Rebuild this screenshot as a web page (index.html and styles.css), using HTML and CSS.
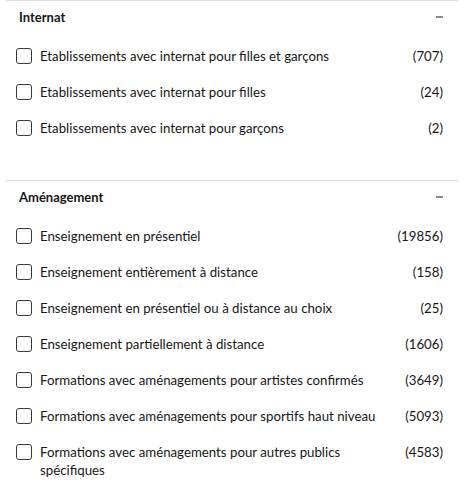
FILE: index.html
```html
<!DOCTYPE html>
<html lang="fr">
<head>
<meta charset="utf-8">
<link rel="stylesheet" href="styles.css">
</head>
<body>
<div class="filters">
  <section class="group">
    <div class="group-head">
      <span class="group-title">Internat</span>
      <span class="toggle" aria-hidden="true"></span>
    </div>
    <ul class="options">
      <li class="option"><span class="box"></span><span class="label">Etablissements avec internat pour filles et garçons</span><span class="count">(707)</span></li>
      <li class="option"><span class="box"></span><span class="label">Etablissements avec internat pour filles</span><span class="count">(24)</span></li>
      <li class="option"><span class="box"></span><span class="label">Etablissements avec internat pour garçons</span><span class="count">(2)</span></li>
    </ul>
  </section>
  <section class="group">
    <div class="group-head">
      <span class="group-title">Aménagement</span>
      <span class="toggle" aria-hidden="true"></span>
    </div>
    <ul class="options">
      <li class="option"><span class="box"></span><span class="label">Enseignement en présentiel</span><span class="count">(19856)</span></li>
      <li class="option"><span class="box"></span><span class="label">Enseignement entièrement à distance</span><span class="count">(158)</span></li>
      <li class="option"><span class="box"></span><span class="label">Enseignement en présentiel ou à distance au choix</span><span class="count">(25)</span></li>
      <li class="option"><span class="box"></span><span class="label">Enseignement partiellement à distance</span><span class="count">(1606)</span></li>
      <li class="option"><span class="box"></span><span class="label">Formations avec aménagements pour artistes confirmés</span><span class="count">(3649)</span></li>
      <li class="option"><span class="box"></span><span class="label">Formations avec aménagements pour sportifs haut niveau</span><span class="count">(5093)</span></li>
      <li class="option"><span class="box"></span><span class="label">Formations avec aménagements pour autres publics spécifiques</span><span class="count">(4583)</span></li>
    </ul>
  </section>
</div>
</body>
</html>
```

FILE: styles.css
```css
html, body {
  margin: 0;
  padding: 0;
  background: #ffffff;
}
body {
  font-family: Lato, "Liberation Sans", sans-serif;
  color: #161616;
}
.filters {
  margin-left: 6px;
  width: 452px;
}
.group {
  border-top: 1px solid #dddddd;
  padding-bottom: 34px;
}
.group:last-child {
  padding-bottom: 0;
}
.group-head {
  height: 32px;
  display: flex;
  align-items: center;
  justify-content: space-between;
  padding-left: 13px;
  padding-right: 15px;
}
.group-title {
  font-weight: 700;
  font-size: 13px;
}
.toggle {
  width: 7px;
  height: 2px;
  background: #8a8a8a;
}
.options {
  list-style: none;
  margin: 5px 0 0 0;
  padding: 0;
}
.option {
  display: flex;
  align-items: flex-start;
  padding: 9px 15px 9px 10px;
  font-size: 13.25px;
  line-height: 18px;
}
.box {
  flex: none;
  width: 16px;
  height: 16px;
  box-sizing: border-box;
  border: 1px solid #3a3a3a;
  border-radius: 3px;
  margin-top: 1px;
  margin-right: 8px;
  background: #fff;
}
.label {
  flex: 1;
  padding-right: 20px;
}
.count {
  flex: none;
}
```
